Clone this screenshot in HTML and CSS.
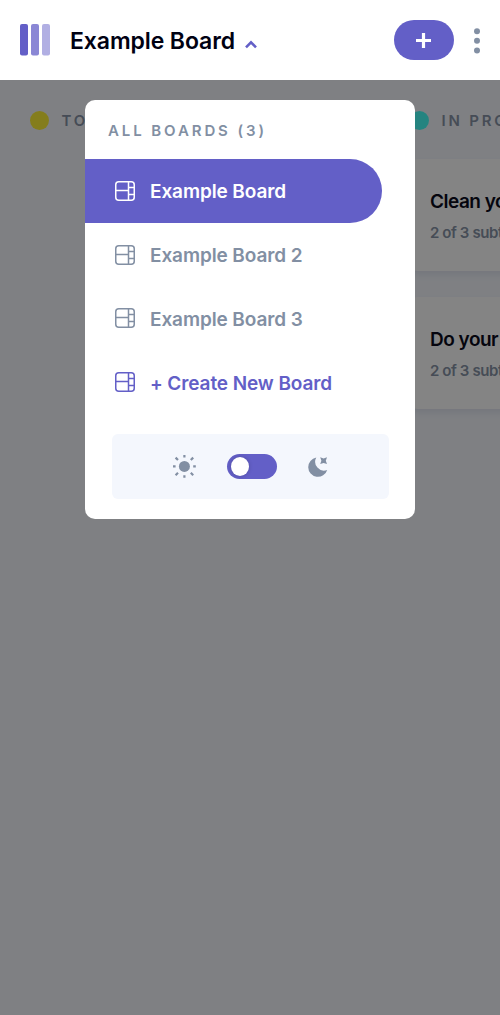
FILE: index.html
```html
<!DOCTYPE html>
<html lang="en">
<head>
<meta charset="utf-8">
<title>Kanban</title>
<link rel="stylesheet" href="styles.css">
</head>
<body>
<svg class="sprite" aria-hidden="true">
  <symbol id="board" viewBox="0 0 20 20">
    <rect x=".75" y=".75" width="18.5" height="18.5" rx="3"/>
    <path d="M13.5 1v18M1 9.5h12.5M13.5 6.5H19M13.5 13.5H19"/>
  </symbol>
</svg>
<header class="header">
  <svg class="logo" width="30" height="32" viewBox="0 0 30 32" fill="#635fc7">
    <rect width="8" height="31.5" rx="2"/>
    <rect x="11" width="8" height="31.5" rx="2" opacity=".75"/>
    <rect x="22" width="8" height="31.5" rx="2" opacity=".5"/>
  </svg>
  <h1 class="title">Example Board</h1>
  <svg class="chevron" width="12" height="9" viewBox="0 0 12 9"><path d="M1 7.4 6 2.4l5 5" fill="none" stroke="#635fc7" stroke-width="2.6"/></svg>
  <button class="add" aria-label="Add task"><svg width="16" height="16" viewBox="0 0 16 16"><path d="M7.5 1v15M0 8.5h15" stroke="#fff" stroke-width="3.2"/></svg></button>
  <svg class="dots" width="6" height="26" viewBox="0 0 6 26" fill="#828fa3"><circle cx="3" cy="3.2" r="3"/><circle cx="3" cy="12.8" r="3"/><circle cx="3" cy="22.4" r="3"/></svg>
</header>
<main class="stage">
  <div class="columns">
    <section class="column">
      <h2 class="column-title"><span class="dot dot-todo"></span>TODO</h2>
    </section>
    <section class="column">
      <h2 class="column-title"><span class="dot dot-progress"></span>IN PROGRESS</h2>
      <article class="card"><h3 class="card-title">Clean your room</h3><p class="card-meta">2 of 3 subtasks</p></article>
      <article class="card"><h3 class="card-title">Do your homework</h3><p class="card-meta">2 of 3 subtasks</p></article>
    </section>
  </div>
  <div class="overlay">
    <nav class="menu">
      <p class="menu-title">ALL BOARDS (3)</p>
      <a class="item active"><svg class="icon"><use href="#board"/></svg><span class="label">Example Board</span></a>
      <a class="item"><svg class="icon"><use href="#board"/></svg><span class="label">Example Board 2</span></a>
      <a class="item"><svg class="icon"><use href="#board"/></svg><span class="label">Example Board 3</span></a>
      <a class="item create"><svg class="icon"><use href="#board"/></svg><span class="label">+ Create New Board</span></a>
      <div class="theme">
        <svg width="24" height="24" viewBox="0 0 24 24" fill="#828fa3"><circle cx="12.4" cy="12.4" r="5.5"/><path d="M12.4 1v2.6M12.4 21.2v2.6M1 12.4h2.6M21.2 12.4h2.6M3.6 3.6 6 6M18.8 18.8l2.4 2.4M3.6 21.2 6 18.8M18.8 6l2.4-2.4" stroke="#828fa3" stroke-width="2.2"/></svg>
        <span class="switch"><span class="knob"></span></span>
        <svg class="moon" width="20" height="20" viewBox="0 0 20 20" fill="#828fa3"><path d="M8.3.6A9.7 9.7 0 1 0 19.2 13 8.8 8.8 0 0 1 8.3.6Z"/><path d="m12.2.3 3.4 1.2L19 .3l-1.2 3.4L19 7.1l-3.4-1.2-3.4 1.2 1.2-3.4Z"/></svg>
      </div>
    </nav>
  </div>
</main>
</body>
</html>
```

FILE: styles.css
```css
* { box-sizing: border-box; margin: 0; }
body { height: 1015px; overflow: hidden; font-family: Inter, "Open Sans", sans-serif; }
.sprite { display: none; }
.header { display: flex; align-items: center; height: 80px; padding: 0 20px; background: #fff; }
.logo { margin-right: 20px; }
.title { width: 165px; font-size: 23px; line-height: 32px; font-weight: 600; letter-spacing: -.1px; white-space: nowrap; color: #000112; padding-top: 2px; }
.chevron { margin: 8px 0 0 10px; }
.add { display: flex; align-items: center; justify-content: center; width: 60px; height: 40px; margin-left: auto; padding: 0; border: 0; border-radius: 20px; background: #635fc7; }
.dots { margin: 1px 0 0 20px; }
.stage { position: relative; height: 935px; overflow: hidden; background: #f4f7fd; }
.columns { display: flex; gap: 30px; width: 790px; padding: 29px 30px 0; }
.column { flex: 0 0 350px; }
.column-title { display: flex; align-items: center; gap: 12.5px; height: 21px; margin-bottom: 29px; padding-top: 1px; font-size: 15px; font-weight: 600; letter-spacing: 2.8px; color: #828fa3; white-space: nowrap; }
.dot { width: 19px; height: 19px; border-radius: 50%; }
.dot-todo { background: #fff02e; }
.dot-progress { background: #40fff6; }
.card { height: 112px; margin-bottom: 25.5px; padding: 30px 20px; border-radius: 8px; background: #fff; box-shadow: 0 4px 6px rgba(54, 78, 126, .1); }
.card-title { font-size: 19px; line-height: 25px; font-weight: 600; letter-spacing: -.5px; color: #000112; white-space: nowrap; }
.card-meta { margin-top: 9px; font-size: 15px; line-height: 20px; font-weight: 600; letter-spacing: -.4px; color: #828fa3; }
.overlay { position: absolute; inset: 0; padding-top: 20px; background: rgba(10, 10, 10, .5); }
.menu { width: 330px; height: 419px; margin: 0 auto; padding-top: 20px; border-radius: 10px; background: #fff; }
.menu-title { height: 39px; padding-left: 23px; font-size: 15px; line-height: 22px; font-weight: 600; letter-spacing: 2.9px; color: #828fa3; white-space: nowrap; }
.item { display: flex; align-items: center; gap: 15px; width: 297px; height: 63.8px; padding-left: 30px; border-radius: 0 32px 32px 0; color: #828fa3; }
.active { background: #635fc7; color: #fff; }
.create { color: #635fc7; }
.icon { width: 20px; height: 20px; fill: none; stroke: currentColor; stroke-width: 1.5; }
.label { font-size: 19px; line-height: 26px; font-weight: 600; letter-spacing: -.1px; white-space: nowrap; padding-top: 3px; }
.theme { display: flex; align-items: center; justify-content: center; gap: 31px; width: 277px; height: 65px; margin: 19.8px 0 0 27px; padding-right: 2px; border-radius: 6px; background: #f4f7fd; }
.switch { display: flex; align-items: center; width: 50px; height: 25px; padding-left: 4px; border-radius: 13px; background: #635fc7; }
.knob { width: 18px; height: 19px; border-radius: 50%; background: #fff; box-shadow: 0 0 4px rgba(0, 0, 0, .2); }
.moon { margin-top: 1px; }
```
